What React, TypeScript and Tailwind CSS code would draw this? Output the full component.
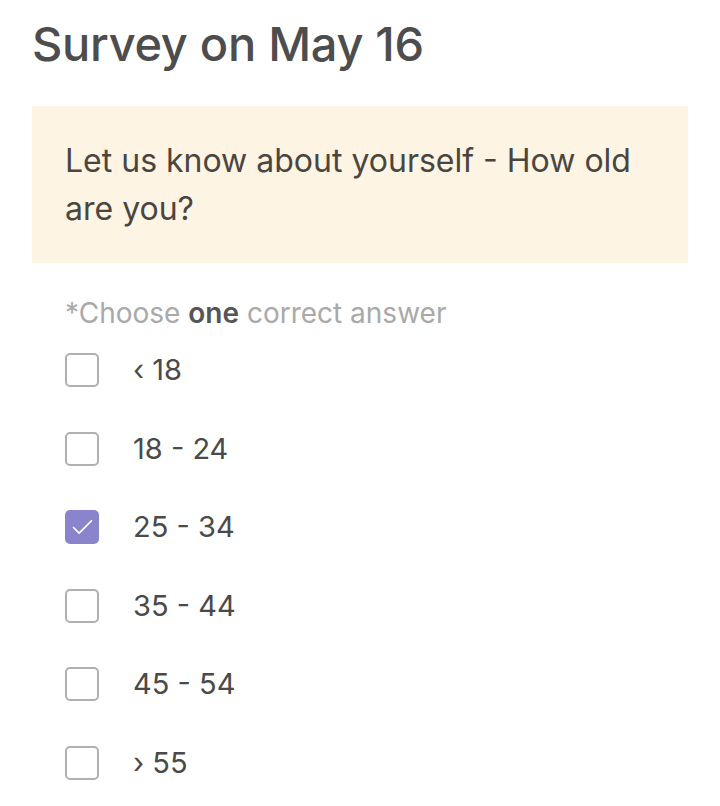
import { Check } from 'lucide-react';

const options = [
  { label: '‹ 18', checked: false },
  { label: '18 - 24', checked: false },
  { label: '25 - 34', checked: true },
  { label: '35 - 44', checked: false },
  { label: '45 - 54', checked: false },
  { label: '› 55', checked: false },
];

export default function App() {
  return (
    <div className="min-h-[806px] w-[720px] bg-white px-8 pt-[14px] font-['Inter',sans-serif] text-[#4a4a4a]">
      <h1 className="text-[47px] leading-[60px] font-medium tracking-[-0.3px] text-[#4d4d4d]">
        Survey on May 16
      </h1>

      {/* Question */}
      <div className="mt-[32px] bg-[#fdf4e4] px-[33px] pt-[31px] pb-[30px]">
        <p className="text-[32px] leading-[48px] font-normal text-[#4a463f]">
          Let us know about yourself - How old are you?
        </p>
      </div>

      <p className="mt-[34px] px-[33px] text-[28px] leading-[32px] text-[#a9a9a9]">
        *Choose <span className="font-semibold text-[#555]">one</span> correct
        answer
      </p>

      <ul className="mt-[24px] flex flex-col gap-[44.5px] px-[33px]">
        {options.map((o) => (
          <li key={o.label} className="flex h-[34px] items-center gap-[34px]">
            {o.checked ? (
              <span className="flex size-[34px] items-center justify-center rounded-[5px] bg-[#8984cc]">
                <Check className="size-[27px] text-white" strokeWidth={1.5} />
              </span>
            ) : (
              <span className="size-[34px] rounded-[5px] border-[2.5px] border-[#b0b0b0]" />
            )}
            <span className="text-[29px] leading-[34px] text-[#4a4a4a]">{o.label}</span>
          </li>
        ))}
      </ul>
    </div>
  );
}
